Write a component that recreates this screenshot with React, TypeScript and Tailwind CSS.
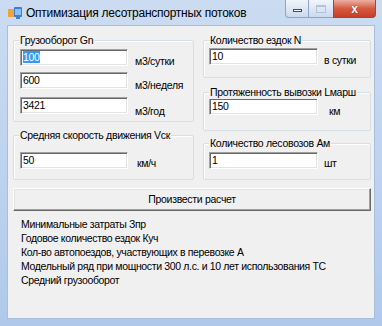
import React from "react";

const FONT = { fontFamily: '"Liberation Sans", Arial, sans-serif' };
const TXT = "text-[10.5px] leading-[13px] tracking-[-0.3px] text-black";

function TextBox({ value, selected, w }: { value: string; selected?: boolean; w: string }) {
  return (
    <div
      className={`${w} ${TXT} h-[17px] shrink-0 bg-white border border-t-[#a0a0a0] border-l-[#a0a0a0] border-b-white border-r-white shadow-[inset_1px_1px_0_#696969,inset_-1px_-1px_0_#e3e3e3] pl-[2px] pt-[1px]`}
    >
      {selected ? <span className="bg-[#3399ff] text-white">{value}</span> : value}
    </div>
  );
}

function Group({
  label,
  className,
  children,
}: {
  label: string;
  className: string;
  children: React.ReactNode;
}) {
  return (
    <div
      className={`relative rounded-[2px] border border-[#d5dfe5] shadow-[inset_1px_1px_0_#fff] ${className}`}
    >
      <span className={`absolute left-[5px] -top-[7px] bg-[#f0f0f0] px-[1px] whitespace-nowrap ${TXT}`}>
        {label}
      </span>
      {children}
    </div>
  );
}

function Row({
  value,
  unit,
  selected,
  w,
  gap,
  drop,
}: {
  value: string;
  unit: string;
  selected?: boolean;
  w: string;
  gap: string;
  drop: string;
}) {
  return (
    <div className="flex items-start">
      <TextBox value={value} selected={selected} w={w} />
      <span className={`${gap} ${drop} ${TXT} whitespace-nowrap`}>{unit}</span>
    </div>
  );
}

export default function App() {
  const results = [
    "Минимальные затраты Зпр",
    "Годовое количество ездок Куч",
    "Кол-во автопоездов, участвующих в перевозке А",
    "Модельный ряд при мощности 300 л.с. и 10 лет использования ТС",
    "Средний грузооборот",
  ];

  return (
    <div
      className="w-[382px] h-[326px] overflow-hidden bg-gradient-to-b from-[#cbdcf2] via-[#bed3ef] to-[#b0c9ea]"
      style={FONT}
    >
      {/* title bar */}
      <div className="flex h-[25px] items-start">
        <div className="flex items-center pl-[8px] pt-[6px]">
          <svg width="14" height="12" viewBox="0 0 14 12">
            <rect x="0" y="2" width="7" height="8" fill="#f2a33a" />
            <rect x="6" y="0" width="8" height="10" rx="1" fill="#3d7fd6" />
            <rect x="7" y="2" width="6" height="6" fill="#8cc0f2" />
            <rect x="8" y="10" width="4" height="2" fill="#3d7fd6" />
          </svg>
          <span className="ml-[4px] text-[12px] leading-[14px] text-black tracking-[-0.25px]">
            Оптимизация лесотранспортных потоков
          </span>
        </div>
        <div className="ml-auto mr-[6px] flex h-[18px]">
          <div className="flex w-[24px] items-center justify-center rounded-bl-[4px] border border-t-0 border-[#8ea4c6] bg-gradient-to-b from-[#f1f5fb] to-[#cbd9ee]">
            <div className="mt-[4px] h-[3px] w-[9px] border border-[#3a4d6e] bg-white" />
          </div>
          <div className="flex w-[24px] items-center justify-center border-b border-[#8ea4c6] bg-gradient-to-b from-[#f1f5fb] to-[#cbd9ee]">
            <div className="h-[8px] w-[10px] border border-[#b4c3d8] border-t-2" />
          </div>
          <div className="flex w-[43px] items-center justify-center rounded-br-[4px] border border-t-0 border-[#9a4a3c] bg-gradient-to-b from-[#eab0a2] via-[#d45a40] to-[#c73e26]">
            <span className="text-[12px] font-bold leading-[12px] text-white [text-shadow:0_0_1px_#5a1a10]">x</span>
          </div>
        </div>
      </div>

      {/* client area */}
      <div className="mx-[7px] h-[294px] border border-[#a9bedc] bg-[#f0f0f0] pl-[5px] pt-[14px]">
        <div className="flex gap-[9px]">
          <div className="flex w-[181px] flex-col gap-[13px]">
            <Group label="Грузооборот Gn" className="h-[82px] pl-[6px] pt-[8px]">
              <div className="flex flex-col gap-[4px]">
                <Row value="100" selected unit="м3/сутки" w="w-[108px]" gap="ml-[7px]" drop="mt-[6px]" />
                <Row value="600" unit="м3/неделя" w="w-[108px]" gap="ml-[7px]" drop="mt-[7px]" />
                <div className="mt-[1px]">
                  <Row value="3421" unit="м3/год" w="w-[108px]" gap="ml-[7px]" drop="mt-[8px]" />
                </div>
              </div>
            </Group>
            <Group label="Средняя скорость движения Vск" className="h-[45px] pl-[6px] pt-[16px]">
              <Row value="50" unit="км/ч" w="w-[108px]" gap="ml-[9px]" drop="mt-[5px]" />
            </Group>
          </div>

          <div className="flex w-[168px] flex-col">
            <Group label="Количество ездок N" className="h-[38px] pl-[5px] pt-[7px]">
              <Row value="10" unit="в сутки" w="w-[109px]" gap="ml-[6px]" drop="mt-[6px]" />
            </Group>
            <Group label="Протяженность вывозки Lмарш" className="mt-[14px] h-[39px] pl-[5px] pt-[5px]">
              <Row value="150" unit="км" w="w-[109px]" gap="ml-[11px]" drop="mt-[7px]" />
            </Group>
            <Group label="Количество лесовозов Ам" className="mt-[12px] h-[37px] pl-[5px] pt-[8px]">
              <Row value="1" unit="шт" w="w-[109px]" gap="ml-[6px]" drop="mt-[5px]" />
            </Group>
          </div>
        </div>

        <button
          className={`mt-[8px] flex h-[23px] w-[358px] items-center justify-center border border-t-white border-l-white border-r-[#696969] border-b-[#696969] bg-[#f0f0f0] shadow-[inset_-1px_-1px_0_#a0a0a0,inset_1px_1px_0_#e3e3e3] ${TXT}`}
        >
          Произвести расчет
        </button>

        <div className="mt-[6px] flex flex-col pl-[8px]">
          {results.map((r) => (
            <div key={r} className="h-[14px] text-[10.5px] leading-[14px] tracking-[-0.35px] text-black whitespace-nowrap">
              {r}
            </div>
          ))}
        </div>
      </div>
    </div>
  );
}
